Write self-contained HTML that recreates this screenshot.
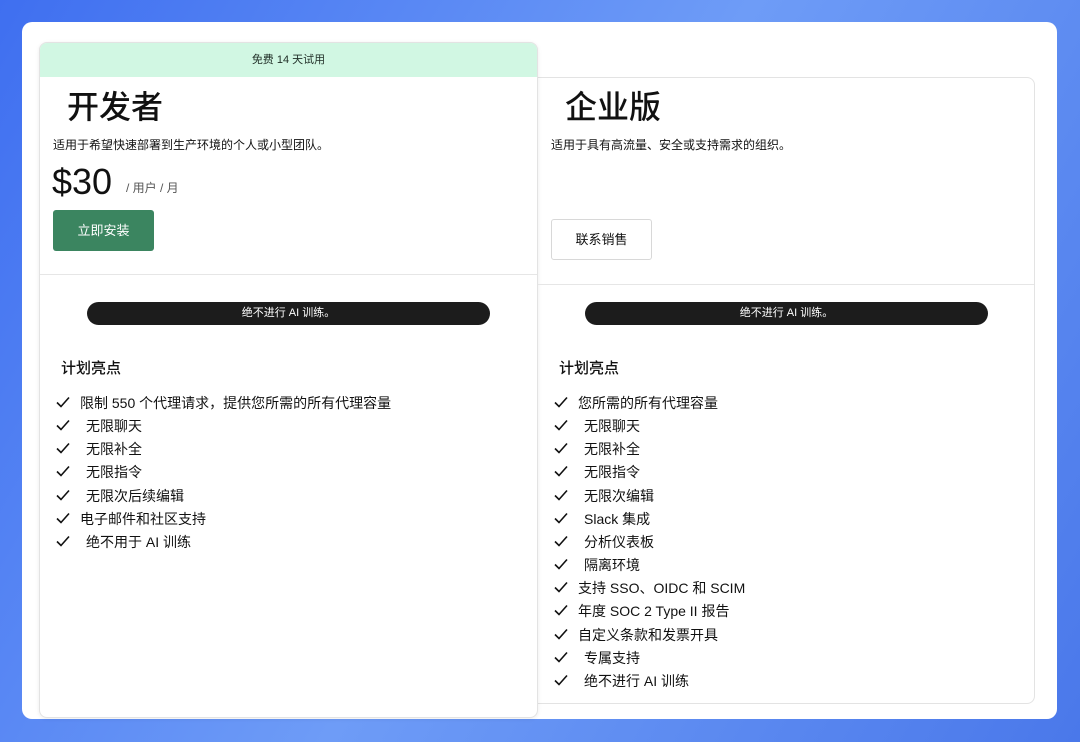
<!DOCTYPE html>
<html><head><meta charset="utf-8"><style>
*{margin:0;padding:0;box-sizing:border-box}
body{width:1080px;height:742px;overflow:hidden;background:linear-gradient(120deg,#3f6ff0 0%,#6e9cf7 50%,#4a78ea 100%);font-family:"Liberation Sans","Noto Sans CJK SC",sans-serif;color:#111;position:relative}
.panel{position:absolute;left:22px;top:22px;width:1035px;height:697px;background:#fff;border-radius:10px}
.card{position:absolute;background:#fff;border:1px solid #e3e3e3;border-radius:8px;overflow:hidden}
.abs{position:absolute;white-space:nowrap}
.pill{position:absolute;height:23px;background:#1c1c1c;border-radius:12px;color:#fff;font-size:11px;text-align:center;line-height:23px}
.li{position:absolute;font-size:14px;white-space:nowrap}
.li svg{position:absolute;left:0;top:3px}
.li span{position:absolute;top:0}
</style></head><body>
<div class="panel"></div>
<div class="card" style="left:538px;top:77px;width:497px;height:627px;border-left:none;border-radius:0 8px 8px 0"></div>
<div class="card" style="left:39px;top:42px;width:499px;height:676px;box-shadow:0 1px 4px rgba(0,0,0,.08)">
  <div style="height:34px;background:#d1f7e3;font-size:11px;text-align:center;line-height:34px;color:#1f2d26">免费 14 天试用</div>
</div>
<div class="abs" style="left:67px;top:82px;font-size:32px;font-weight:500">开发者</div>
<div class="abs" style="left:53px;top:136px;font-size:12px">适用于希望快速部署到生产环境的个人或小型团队。</div>
<div class="abs" style="left:52px;top:161px;font-size:36px">$30</div>
<div class="abs" style="left:126px;top:179px;font-size:12px;color:#555">/ 用户 / 月</div>
<div class="abs" style="left:53px;top:210px;width:101px;height:41px;background:#3b8560;border-radius:3px;color:#fff;font-size:13px;text-align:center;line-height:41px">立即安装</div>
<div class="abs" style="left:40px;top:274px;width:497px;height:1px;background:#e6e6e6"></div>

<div class="abs" style="left:565px;top:82px;font-size:32px;font-weight:500">企业版</div>
<div class="abs" style="left:551px;top:136px;font-size:12px">适用于具有高流量、安全或支持需求的组织。</div>
<div class="abs" style="left:551px;top:219px;width:101px;height:41px;border:1px solid #d8d8d8;border-radius:3px;font-size:13px;text-align:center;line-height:39px">联系销售</div>
<div class="abs" style="left:538px;top:284px;width:496px;height:1px;background:#e6e6e6"></div>

<div class="pill" style="left:87px;top:302px;width:403px">绝不进行 AI 训练。</div>
<div class="pill" style="left:585px;top:302px;width:403px">绝不进行 AI 训练。</div>
<div class="abs" style="left:61px;top:357px;font-size:15px;font-weight:500">计划亮点</div>
<div class="abs" style="left:559px;top:357px;font-size:15px;font-weight:500">计划亮点</div>

<div id="L"></div><div id="R"></div>
<script>
const ck='<svg width="14" height="12" viewBox="0 0 14 12"><path d="M1 6.5l4 4L13 1.5" fill="none" stroke="#111" stroke-width="1.6"/></svg>';
function list(el,x,items){let h='';items.forEach((t,i)=>{const pad=t[0]===' ';h+=`<div class="li" style="left:${x}px;top:${393+i*23.15}px">${ck}<span style="left:${pad?30:24}px">${t.trim()}</span></div>`});document.getElementById(el).innerHTML=h}
list('L',56,['限制 550 个代理请求，提供您所需的所有代理容量',' 无限聊天',' 无限补全',' 无限指令',' 无限次后续编辑','电子邮件和社区支持',' 绝不用于 AI 训练']);
list('R',554,['您所需的所有代理容量',' 无限聊天',' 无限补全',' 无限指令',' 无限次编辑',' Slack 集成',' 分析仪表板',' 隔离环境','支持 SSO、OIDC 和 SCIM','年度 SOC 2 Type II 报告','自定义条款和发票开具',' 专属支持',' 绝不进行 AI 训练']);
</script>
</body></html>
